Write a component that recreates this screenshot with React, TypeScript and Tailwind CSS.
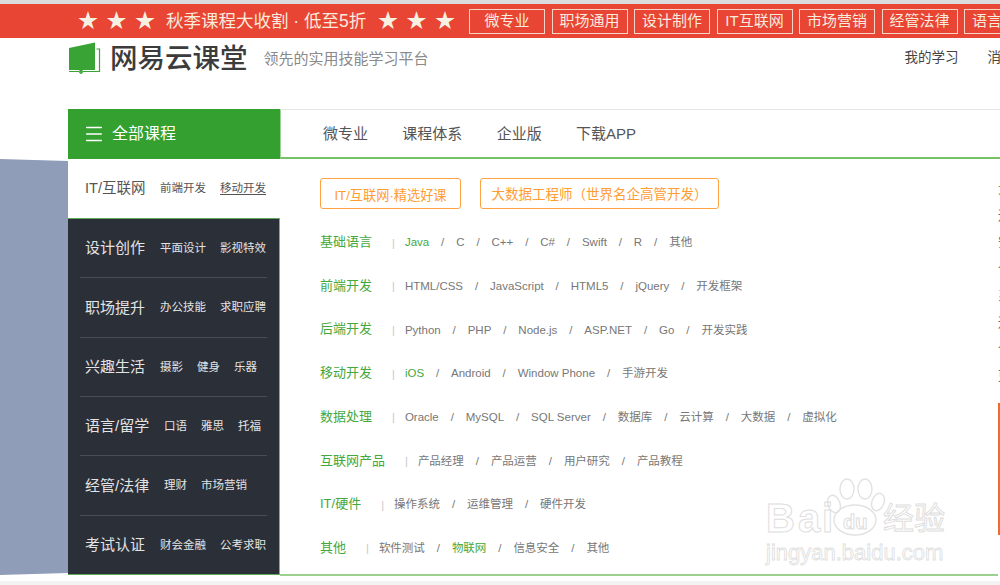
import { Menu } from 'lucide-react';

const SANS = "font-['Liberation_Sans','Noto_Sans_CJK_SC',sans-serif]";

const promoTags = ['微专业', '职场通用', '设计制作', 'IT互联网', '市场营销', '经管法律', '语言留学'];

const sideMenu = [
  { title: '设计创作', subs: ['平面设计', '影视特效'] },
  { title: '职场提升', subs: ['办公技能', '求职应聘'] },
  { title: '兴趣生活', subs: ['摄影', '健身', '乐器'] },
  { title: '语言/留学', subs: ['口语', '雅思', '托福'] },
  { title: '经管/法律', subs: ['理财', '市场营销'] },
  { title: '考试认证', subs: ['财会金融', '公考求职'] },
];

const courseRows = [
  { title: '基础语言', links: ['Java', 'C', 'C++', 'C#', 'Swift', 'R', '其他'], hot: ['Java'] },
  { title: '前端开发', links: ['HTML/CSS', 'JavaScript', 'HTML5', 'jQuery', '开发框架'], hot: [] },
  { title: '后端开发', links: ['Python', 'PHP', 'Node.js', 'ASP.NET', 'Go', '开发实践'], hot: [] },
  { title: '移动开发', links: ['iOS', 'Android', 'Window Phone', '手游开发'], hot: ['iOS'] },
  { title: '数据处理', links: ['Oracle', 'MySQL', 'SQL Server', '数据库', '云计算', '大数据', '虚拟化'], hot: [] },
  { title: '互联网产品', links: ['产品经理', '产品运营', '用户研究', '产品教程'], hot: [] },
  { title: 'IT/硬件', links: ['操作系统', '运维管理', '硬件开发'], hot: [] },
  { title: '其他', links: ['软件测试', '物联网', '信息安全', '其他'], hot: ['物联网'] },
];

const sliverText = ['大', '通', '安', '个', '系', '通', '个', '更'];

const Stars = () => (
  <div className="flex shrink-0 gap-[8.5px] text-[20px] leading-none text-[#f6f1e2]">
    <span>★</span>
    <span>★</span>
    <span>★</span>
  </div>
);

const Logo = () => (
  <svg width="32" height="32" viewBox="0 0 32 32" className="shrink-0">
    <path d="M0 6 L26 0.5 V28 H14 L12 31 L10 28 H0 Z" fill="#3aa335" />
    <path d="M27.5 7 H30.5 V29.5 H14 L12 31.5 L10 29.5 H0" fill="none" stroke="#3aa335" strokeWidth="1.2" />
  </svg>
);

const Watermark = () => (
  <div className={`pointer-events-none absolute left-[766px] top-[476px] h-[90px] w-[182px] ${SANS}`}>
    <svg width="182" height="62" viewBox="0 0 182 62" className="absolute left-0 top-0" fill="none" stroke="#e2e2e2" strokeWidth="1.4">
      <ellipse cx="68" cy="28" rx="6" ry="9" transform="rotate(-20 68 28)" />
      <ellipse cx="81" cy="13" rx="7" ry="10" />
      <ellipse cx="99" cy="13" rx="7" ry="10" />
      <ellipse cx="112" cy="26" rx="6" ry="9" transform="rotate(20 112 26)" />
      <ellipse cx="89" cy="44" rx="21" ry="15" />
    </svg>
    <span className="absolute left-0 top-[22px] text-[40px] font-bold leading-none tracking-[3px] text-transparent [-webkit-text-stroke:1px_#dedede]">Ba</span>
    <span className="absolute left-[56px] top-[22px] text-[40px] font-bold leading-none text-transparent [-webkit-text-stroke:1px_#dedede]">i</span>
    <span className="absolute left-[77px] top-[36px] text-[20px] font-bold leading-none text-transparent [-webkit-text-stroke:1px_#dedede]">du</span>
    <span className="absolute left-[117px] top-[27px] text-[31px] leading-none text-transparent [-webkit-text-stroke:1px_#dedede]">经验</span>
    <span className="absolute left-0 top-[66px] text-[22px] leading-none text-transparent [-webkit-text-stroke:0.8px_#dedede]">jingyan.baidu.com</span>
  </div>
);

const App = () => {
  return (
    <div className={`relative flex h-[585px] w-[1000px] flex-col overflow-hidden bg-white ${SANS}`}>
      <div className="h-[4px] shrink-0 bg-[#dcdcdc]" />

      {/* promo bar */}
      <div className="flex h-[34px] shrink-0 items-center whitespace-nowrap bg-[#e84534] pl-[78px] text-[#f8ebdd]">
        <Stars />
        <span className="ml-[11px] w-[201px] shrink-0 text-[17.5px]">秋季课程大收割 · 低至5折</span>
        <div className="ml-[11px] shrink-0">
          <Stars />
        </div>
        <div className="ml-[14px] flex shrink-0 gap-[6.5px]">
          {promoTags.map((tag) => (
            <span key={tag} className="flex h-[25px] w-[76px] shrink-0 items-center justify-center border border-[#f6d5c6] text-[15px]">
              {tag}
            </span>
          ))}
        </div>
      </div>

      {/* header */}
      <header className="flex h-[71px] shrink-0 items-start whitespace-nowrap pl-[69px] pt-[4px]">
        <Logo />
        <span className="ml-[9px] mt-[1px] text-[27.5px] font-medium leading-[32px] text-[#3c3c3c]">网易云课堂</span>
        <span className="ml-[16px] mt-[7px] text-[15px] leading-[20px] text-[#8a8a8a]">领先的实用技能学习平台</span>
        <span className="ml-[476px] mt-[6px] text-[13.5px] leading-[20px] text-[#444]">我的学习</span>
        <span className="ml-[29px] mt-[6px] text-[13.5px] leading-[20px] text-[#444]">消息</span>
      </header>

      {/* nav */}
      <div className="flex h-[50px] shrink-0 pl-[68px]">
        <div className="flex w-[212px] shrink-0 items-center bg-[#33a02f] pl-[15px] text-white">
          <Menu size={22} strokeWidth={1.6} />
          <span className="ml-[7px] text-[16px]">全部课程</span>
        </div>
        <nav className="flex flex-1 items-center gap-[34.3px] border-b-2 border-l border-t border-b-[#74c265] border-l-[#9ed294] border-t-[#e6e6e6] pl-[42px] pt-[1px] text-[15px] text-[#555]">
          <span>微专业</span>
          <span>课程体系</span>
          <span>企业版</span>
          <span>下载APP</span>
        </nav>
      </div>

      <div className="flex h-[417px] shrink-0">
        <div className="h-[416px] w-[68px] shrink-0 bg-[#8f9db9] [clip-path:polygon(0_0,100%_2px,100%_99.5%,0_100%)]" />

        {/* category menu */}
        <aside className="flex h-[416px] w-[212px] shrink-0 flex-col whitespace-nowrap">
          <div className="flex h-[59px] shrink-0 items-center pl-[17px] text-[#555]">
            <span className="w-[75px] text-[14.5px]">IT/互联网</span>
            <span className="w-[60px] text-[11.5px]">前端开发</span>
            <span className="text-[11.5px] underline underline-offset-2">移动开发</span>
          </div>
          <div className="flex flex-1 flex-col border-y border-r border-y-[#5fa858] border-r-[#76b96c] bg-[#2b2f38] px-[12px] text-[#e3e3e3]">
            {sideMenu.map((item, i) => (
              <div key={item.title} className={`flex flex-1 items-center pl-[5px] pt-[1px] ${i < sideMenu.length - 1 ? 'border-b border-[#494c55]' : ''}`}>
                <span className={`text-[15px] ${item.title.includes('/') ? 'w-[79px]' : 'w-[75px]'}`}>{item.title}</span>
                <div className="flex gap-[14px] text-[11.5px]">
                  {item.subs.map((sub) => (
                    <span key={sub}>{sub}</span>
                  ))}
                </div>
              </div>
            ))}
          </div>
        </aside>

        {/* course links */}
        <main className="flex w-[718px] shrink-0 flex-col whitespace-nowrap border-b-2 border-[#9bd08f] pl-[40px] pt-[19px]">
          <div className="flex gap-[19px]">
            <span className="flex h-[31px] w-[141px] items-center justify-center rounded-[3px] border border-[#ffa244] pt-[4px] text-[13.2px] text-[#ff9c33]">IT/互联网·精选好课</span>
            <span className="flex h-[31px] w-[239px] items-center justify-center rounded-[3px] border border-[#ffa244] pt-[4px] text-[13.5px] text-[#ff9c33]">大数据工程师（世界名企高管开发）</span>
          </div>
          <div className="mt-[12px] flex flex-col">
            {courseRows.map((row) => (
              <div key={row.title} className="flex h-[43.7px] items-center">
                <span className="pb-[2px] text-[13px] text-[#45a83c]">{row.title}</span>
                <span className="ml-[20px] mr-[10px] text-[11px] text-[#c8c8c8]">|</span>
                {row.links.map((link, i) => (
                  <span key={link} className="flex items-center text-[11.5px]">
                    {i > 0 && <span className="w-[27px] text-center text-[#777]">/</span>}
                    <span className={row.hot.includes(link) ? 'text-[#45a83c]' : 'text-[#777]'}>{link}</span>
                  </span>
                ))}
              </div>
            ))}
          </div>
        </main>

        {/* edge of the next panel, cut off by the window */}
        <div className="w-[2px] shrink-0 overflow-hidden pt-[17px]">
          <div className="flex w-[20px] flex-col text-[13px] leading-[26.7px] text-[#666]">
            {sliverText.map((ch, i) => (
              <span key={i} className={i === 0 ? 'text-[#45a83c]' : ''}>
                {ch}
              </span>
            ))}
          </div>
          <div className="mt-[13px] h-[132px] bg-[#ee6a33]" />
        </div>
      </div>

      <div className="h-[5px] shrink-0" />
      <div className="flex-1 bg-[#f3f3f3]" />

      <Watermark />
    </div>
  );
};

export default App;
